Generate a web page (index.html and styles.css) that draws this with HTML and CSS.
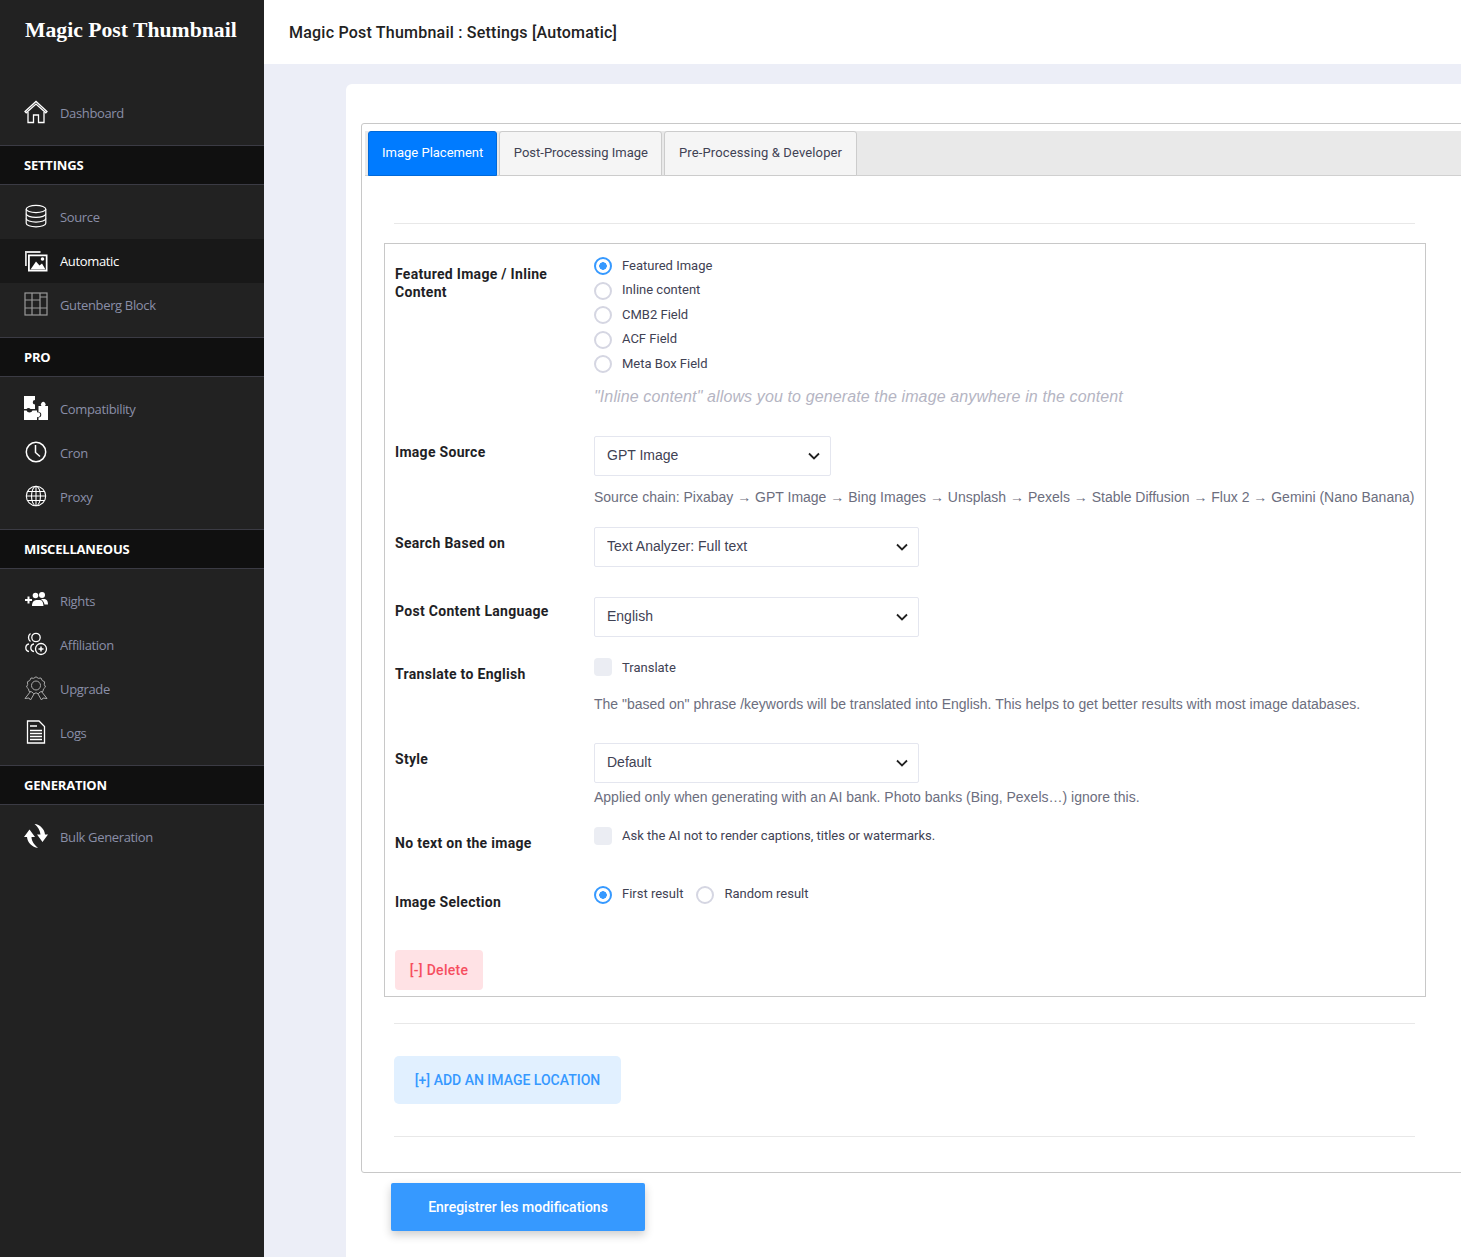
FILE: index.html
```html
<!DOCTYPE html>
<html>
  <head>
    <title>Magic Post Thumbnail : Settings [Automatic]</title>
    <link rel="stylesheet" href="styles.css">
  </head>
  <body>
    <div class="sidebar">
      <div class="logo">Magic Post Thumbnail</div>

      <ul class="menu">
        <li class="menu-item">
          <svg class="icon" viewBox="0 0 24 24" fill="none" stroke="#fff" stroke-width="1.3"><path d="M1 11.5 12 1.5l11 10-1.2 1.3L12 4 2.2 12.8z"/><path d="M4 12v10.5h5.5V15h5v7.5H20V12"/></svg>
          <span>Dashboard</span>
        </li>
      </ul>

      <div class="menu-title">SETTINGS</div>
      <ul class="menu">
        <li class="menu-item">
          <svg class="icon" viewBox="0 0 24 24" fill="none" stroke="#fff" stroke-width="1.2"><ellipse cx="12" cy="5" rx="9.8" ry="3.6"/><path d="M2.2 5v14.2c0 2 4.4 3.6 9.8 3.6s9.8-1.600 9.800-3.600V5"/><path d="M2.200 9.800c0 2 4.400 3.600 9.800 3.600s9.800-1.600 9.800-3.600"/><path d="M2.200 14.500c0 2 4.400 3.600 9.800 3.600s9.800-1.600 9.800-3.600"/></svg>
          <span>Source</span>
        </li>
        <li class="menu-item active">
          <svg class="icon" viewBox="0 0 24 24"><path fill="#ddd" d="M1 3h15.500v2H2.800v13H1z"/><path fill="#fff" fill-rule="evenodd" d="M4 6.500H23.500V23.500H4zM5.800 8.200v13.500h16V8.200z"/><path fill="#fff" d="M6.500 21.500l5.500-8 3.500 4 2.500-2 3.500 6z"/><circle cx="18.500" cy="11" r="1.800" fill="#fff"/></svg>
          <span>Automatic</span>
        </li>
        <li class="menu-item">
          <svg class="icon" viewBox="0 0 24 24" fill="none" stroke="#999" stroke-width="1.200"><rect x="1" y="1" width="22" height="22"/><path d="M8 1v22M16 1v22M1 8h15M1 16h22M16 5h7"/></svg>
          <span>Gutenberg Block</span>
        </li>
      </ul>

      <div class="menu-title">PRO</div>
      <ul class="menu">
        <li class="menu-item">
          <svg class="icon" viewBox="0 0 24 24" fill="#fff"><path d="M0 0h11v4a2.200 2.200 0 1 0 0 4.500v4.500H6.500a2.600 2.600 0 0 0-4 0H0z"/><path d="M0 14.500h2.500a3.200 3.200 0 0 0 6 0H13v2a2.400 2.400 0 1 1 0 4.500V24H0z"/><path d="M14.500 24v-2.500a2.700 2.700 0 1 0 0-5.500V10h3a2.400 2.400 0 1 1 3.500 0H24v14z"/></svg>
          <span>Compatibility</span>
        </li>
        <li class="menu-item">
          <svg class="icon" viewBox="0 0 24 24" fill="none" stroke="#fff" stroke-width="1.500"><circle cx="12" cy="12" r="9.700"/><path d="M11.500 5v7.500l4.500 4"/></svg>
          <span>Cron</span>
        </li>
        <li class="menu-item">
          <svg class="icon" viewBox="0 0 24 24" fill="none" stroke="#fff" stroke-width="1.100"><circle cx="12" cy="12" r="9.700"/><ellipse cx="12" cy="12" rx="4.500" ry="9.700"/><path d="M12 2.300v19.400M2.300 12h19.400M3.500 7.500h17M3.500 16.500h17"/></svg>
          <span>Proxy</span>
        </li>
      </ul>

      <div class="menu-title">MISCELLANEOUS</div>
      <ul class="menu">
        <li class="menu-item">
          <svg class="icon" viewBox="0 0 24 24"><path stroke="#fff" stroke-width="2" d="M1 12h7M4.500 8.500v7"/><circle cx="11.500" cy="7.500" r="2.800" fill="#fff"/><circle cx="18" cy="7" r="3" fill="#fff"/><path fill="#fff" d="M8 18c0-4 2-6 5-6h2c3 0 4 1 4.500 6zM17 11h2.500c3 0 4.500 1.500 4.500 5.500h-3.500c-.5-2.500-1.500-4-3.500-5.500z"/></svg>
          <span>Rights</span>
        </li>
        <li class="menu-item">
          <svg class="icon" viewBox="0 0 24 24" fill="none" stroke="#fff" stroke-width="1.300"><circle cx="12" cy="5.500" r="4.200"/><path d="M6.500 1.500a5 5 0 0 0 0 8"/><path d="M5 12a3.800 3.800 0 0 0 0 7.500M10 12a3.800 3.800 0 0 0 0 7.500"/><circle cx="17" cy="17" r="5.500"/><path d="M17 14.500v5M14.500 17h5" stroke-width="1.500"/></svg>
          <span>Affiliation</span>
        </li>
        <li class="menu-item">
          <svg class="icon" viewBox="0 0 24 24" fill="none" stroke="#aaa" stroke-width="1"><path d="M12 .8l2.300 1.500 2.700-.3 1.200 2.500 2.400 1.300-.3 2.700 1.200 2.500-2 1.900-.6 2.600-2.700.4-2 1.900-2.200-1-2.200 1-2-1.900-2.700-.4-.6-2.600-2-1.900 1.200-2.500-.3-2.700 2.400-1.300L7 2l2.700.3z"/><circle cx="12" cy="9.500" r="4.500"/><path d="M6.500 15.500 1 22.500l4-.5 1.500 2 3.500-6M17.500 15.500l5.500 7-4-.5-1.500 2-3.500-6"/></svg>
          <span>Upgrade</span>
        </li>
        <li class="menu-item">
          <svg class="icon" viewBox="0 0 24 24" fill="none" stroke="#fff"><path stroke-width="1.300" d="M3.500 1h11.500l5.500 5.500V23h-17z"/><path stroke-width="1.300" d="M6 6h7M6 10.500h12M6 13.500h12M6 16.500h12M6 19.500h12"/></svg>
          <span>Logs</span>
        </li>
      </ul>

      <div class="menu-title">GENERATION</div>
      <ul class="menu">
        <li class="menu-item">
          <svg class="icon" viewBox="0 0 24 24" fill="#fff"><path d="M10.500 0C16 .5 20.500 5 21 10.500h3L18.500 18 13 10.500h3.500C16 6 14 3 10.500 0z"/><path d="M14 24C8 23 3.500 18.500 3 13H0l5.500-7.500L11 13H7.500c0 4 3 8 6.500 11z"/></svg>
          <span>Bulk Generation</span>
        </li>
      </ul>
    </div>

    <div class="main">
      <div class="page-header">Magic Post Thumbnail : Settings [Automatic]</div>

      <div class="card">
        <div class="tabs-wrap">
          <div class="tabs">
            <a class="tab selected">Image Placement</a>
            <a class="tab">Post-Processing Image</a>
            <a class="tab tab-wide">Pre-Processing &amp; Developer</a>
          </div>

          <hr class="line line-top">

          <div class="location">
            <div class="field field-placement">
              <label class="field-label">Featured Image / Inline Content</label>
              <div class="field-body">
                <label class="choice"><input type="radio" name="placement" checked> Featured Image</label>
                <label class="choice"><input type="radio" name="placement"> Inline content</label>
                <label class="choice"><input type="radio" name="placement"> CMB2 Field</label>
                <label class="choice"><input type="radio" name="placement"> ACF Field</label>
                <label class="choice"><input type="radio" name="placement"> Meta Box Field</label>
                <p class="note">"Inline content" allows you to generate the image anywhere in the content</p>
              </div>
            </div>

            <div class="field field-source">
              <label class="field-label">Image Source</label>
              <div class="field-body">
                <select class="short"><option>GPT Image</option></select>
                <p class="help help-chain">Source chain: Pixabay → GPT Image → Bing Images → Unsplash → Pexels → Stable Diffusion → Flux 2 → Gemini (Nano Banana)</p>
              </div>
            </div>

            <div class="field field-based">
              <label class="field-label">Search Based on</label>
              <div class="field-body">
                <select><option>Text Analyzer: Full text</option></select>
              </div>
            </div>

            <div class="field field-language">
              <label class="field-label">Post Content Language</label>
              <div class="field-body">
                <select><option>English</option></select>
              </div>
            </div>

            <div class="field field-translate">
              <label class="field-label">Translate to English</label>
              <div class="field-body">
                <label class="choice check"><input type="checkbox"> Translate</label>
                <p class="help help-translate">The "based on" phrase /keywords will be translated into English. This helps to get better results with most image databases.</p>
              </div>
            </div>

            <div class="field field-style">
              <label class="field-label">Style</label>
              <div class="field-body">
                <select><option>Default</option></select>
                <p class="help help-style">Applied only when generating with an AI bank. Photo banks (Bing, Pexels…) ignore this.</p>
              </div>
            </div>

            <div class="field field-notext">
              <label class="field-label">No text on the image</label>
              <div class="field-body">
                <label class="choice check"><input type="checkbox"> Ask the AI not to render captions, titles or watermarks.</label>
              </div>
            </div>

            <div class="field field-selection">
              <label class="field-label">Image Selection</label>
              <div class="field-body inline">
                <label class="choice"><input type="radio" name="selection" checked> First result</label>
                <label class="choice"><input type="radio" name="selection"> Random result</label>
              </div>
            </div>

            <button class="btn-delete" type="button">[-] Delete</button>
          </div>

          <hr class="line line-mid">
          <button class="btn-add" type="button">[+] ADD AN IMAGE LOCATION</button>
          <hr class="line line-end">
        </div>

        <button class="btn-save" type="button">Enregistrer les modifications</button>
      </div>
    </div>
  </body>
</html>
```

FILE: styles.css
```css
* {
  box-sizing: border-box;
}
html,
body {
  height: 100%;
}
body {
  margin: 0;
  display: flex;
  overflow: hidden;
  background-color: #eceef7;
  font-family: Roboto, Arial, sans-serif;
  color: #3f4254;
}

/* sidebar */
.sidebar {
  width: 264px;
  flex: none;
  background-color: #222222;
  font-family: "Open Sans", sans-serif;
}
.logo {
  height: 91px;
  padding: 14px 0 0 25px;
  color: #fff;
  font-family: "Liberation Serif", serif;
  font-weight: bold;
  font-size: 21.7px;
  line-height: 32px;
  white-space: nowrap;
}
.menu {
  list-style: none;
  margin: 0;
  padding: 0 0 10px;
}
.menu-title + .menu {
  padding-top: 10px;
}
.menu-item {
  height: 44px;
  padding-left: 24px;
  display: flex;
  align-items: center;
  gap: 12px;
  font-size: 13px;
  letter-spacing: -0.35px;
  color: #8a8fa8;
}
.menu-item.active {
  background-color: #181818;
  color: #fff;
  font-weight: 500;
}
.icon {
  width: 24px;
  height: 24px;
  flex: none;
  margin-top: -2px;
}
.menu-title {
  height: 40px;
  padding-left: 24px;
  border-top: 1px solid #3b3b44;
  border-bottom: 1px solid #3b3b44;
  background-color: #101010;
  color: #fff;
  font-size: 13px;
  font-weight: 700;
  line-height: 38px;
  letter-spacing: -0.2px;
}

/* main */
.main {
  flex: 1;
  min-width: 0;
}
.page-header {
  height: 64px;
  padding-left: 25px;
  background-color: #fff;
  color: #222;
  font-size: 16px;
  font-weight: 500;
  line-height: 66px;
  letter-spacing: 0.22px;
}
.card {
  width: 1300px;
  height: 1200px;
  margin: 20px 0 0 82px;
  padding: 39px 0 0 15px;
  background-color: #fff;
  border-radius: 6px 0 0 0;
}
.tabs-wrap {
  width: 1200px;
  height: 1050px;
  padding: 7px 0 0 3px;
  border: 1px solid #c8c8c8;
  border-radius: 3px 0 0 3px;
}
.tabs {
  height: 45px;
  padding-left: 3px;
  display: flex;
  gap: 2px;
  background-color: #e9e9e9;
  border-bottom: 1px solid #d0d0d0;
}
.tab {
  height: 45px;
  padding: 0 13.5px;
  background-color: #f5f5f5;
  border: 1px solid #ccc;
  border-radius: 3px 3px 0 0;
  font-size: 13px;
  line-height: 41px;
  white-space: nowrap;
}
.tab.selected {
  padding: 0 13px;
  background-color: #007bff;
  border-color: #0069d9;
  color: #fff;
}
.tab-wide {
  letter-spacing: 0.13px;
}
.line {
  height: 1px;
  margin: 0 0 0 29px;
  width: 1021px;
  border: 0;
  background-color: #e8e8e8;
}
.line-top {
  margin-top: 47px;
}
.line-mid {
  margin-top: 26px;
}
.line-end {
  margin-top: 32px;
}

.location {
  width: 1042px;
  height: 754px;
  margin: 19px 0 0 19px;
  padding: 0 10px;
  border: 1px solid #c8c8c8;
}
.field {
  display: flex;
}
.field-label {
  width: 199px;
  flex: none;
  color: #1f1f26;
  font-size: 14px;
  font-weight: 700;
  line-height: 18px;
  letter-spacing: 0.3px;
}
.field-body {
  flex: 1;
  min-width: 0;
}
.field-body.inline {
  display: flex;
  gap: 13px;
}
.choice {
  height: 24.5px;
  display: flex;
  align-items: center;
  gap: 10px;
  font-size: 13px;
  white-space: nowrap;
}
.note {
  margin: 11.5px 0 0;
  color: #b5b5c3;
  font-family: "Liberation Sans", Arial, sans-serif;
  font-style: italic;
  font-size: 16px;
  line-height: 20px;
  letter-spacing: 0.12px;
}
.help {
  margin: 0;
  font-family: "Liberation Sans", Arial, sans-serif;
  font-size: 14px;
  line-height: 18px;
  color: #6c6e7e;
  white-space: nowrap;
}
.help-chain {
  margin-top: 12px;
}
.help-translate {
  margin-top: 15px;
}
.help-style {
  margin-top: 5px;
}
input[type="radio"],
input[type="checkbox"] {
  appearance: none;
  width: 18px;
  height: 18px;
  margin: 0;
  flex: none;
  background-color: #fff;
}
input[type="radio"] {
  border: 2px solid #d5d6e2;
  border-radius: 50%;
  transform: translateY(1px);
}
input[type="radio"]:checked {
  border-color: #3699ff;
  background: radial-gradient(circle, #3699ff 0 3.5px, #fff 4px);
}
input[type="checkbox"] {
  background-color: #ebedf3;
  border-radius: 4px;
}
select {
  appearance: none;
  display: block;
  width: 325px;
  height: 40px;
  padding: 0 0 2px 12px;
  border: 1px solid #e4e6ef;
  border-radius: 2px;
  background: #fff url("data:image/svg+xml,%3Csvg xmlns='http://www.w3.org/2000/svg' width='12' height='8'%3E%3Cpath d='M1 1.500l5 5 5-5' fill='none' stroke='%23222' stroke-width='1.800'/%3E%3C/svg%3E") no-repeat right 10px center;
  color: #3f4254;
  font-family: "Liberation Sans", Arial, sans-serif;
  font-size: 14px;
}
select.short {
  width: 237px;
}

/* each row sits at its own distance from the previous one */
.field-placement {
  padding-top: 9px;
}
.field-placement .field-label {
  padding-top: 12px;
}
.field-source {
  margin-top: 29px;
}
.field-source .field-label {
  padding-top: 7px;
}
.field-based {
  margin-top: 21px;
}
.field-based .field-label {
  padding-top: 7px;
}
.field-language {
  margin-top: 30px;
}
.field-language .field-label {
  padding-top: 5px;
}
.field-translate {
  margin-top: 18px;
}
.field-translate .field-label {
  padding-top: 10px;
}
.field-style {
  margin-top: 30px;
}
.field-style .field-label {
  padding-top: 7px;
}
.field-notext {
  margin-top: 18px;
}
.field-notext .field-label {
  padding-top: 10px;
}
.field-selection {
  margin-top: 30px;
}
.field-selection .field-label {
  padding-top: 11px;
}

.btn-delete {
  display: block;
  width: 88px;
  height: 40px;
  margin-top: 39px;
  border: 0;
  border-radius: 4px;
  background-color: #ffe2e5;
  color: #f64e60;
  font-family: Roboto, Arial, sans-serif;
  font-size: 14px;
  font-weight: 500;
  letter-spacing: 0.3px;
}
.btn-add {
  display: block;
  width: 227px;
  height: 48px;
  padding-bottom: 2px;
  margin: 32px 0 0 29px;
  border: 0;
  border-radius: 5px;
  background-color: #e1f0ff;
  color: #3699ff;
  font-family: Roboto, Arial, sans-serif;
  font-size: 14px;
  font-weight: 500;
}
.btn-save {
  display: block;
  width: 254px;
  height: 48px;
  margin: 10px 0 0 30px;
  border: 0;
  border-radius: 2px;
  background-color: #3699ff;
  color: #fff;
  font-family: Roboto, Arial, sans-serif;
  font-size: 14px;
  font-weight: 500;
  box-shadow: 0 4px 10px rgba(0, 0, 0, 0.2);
}
```
